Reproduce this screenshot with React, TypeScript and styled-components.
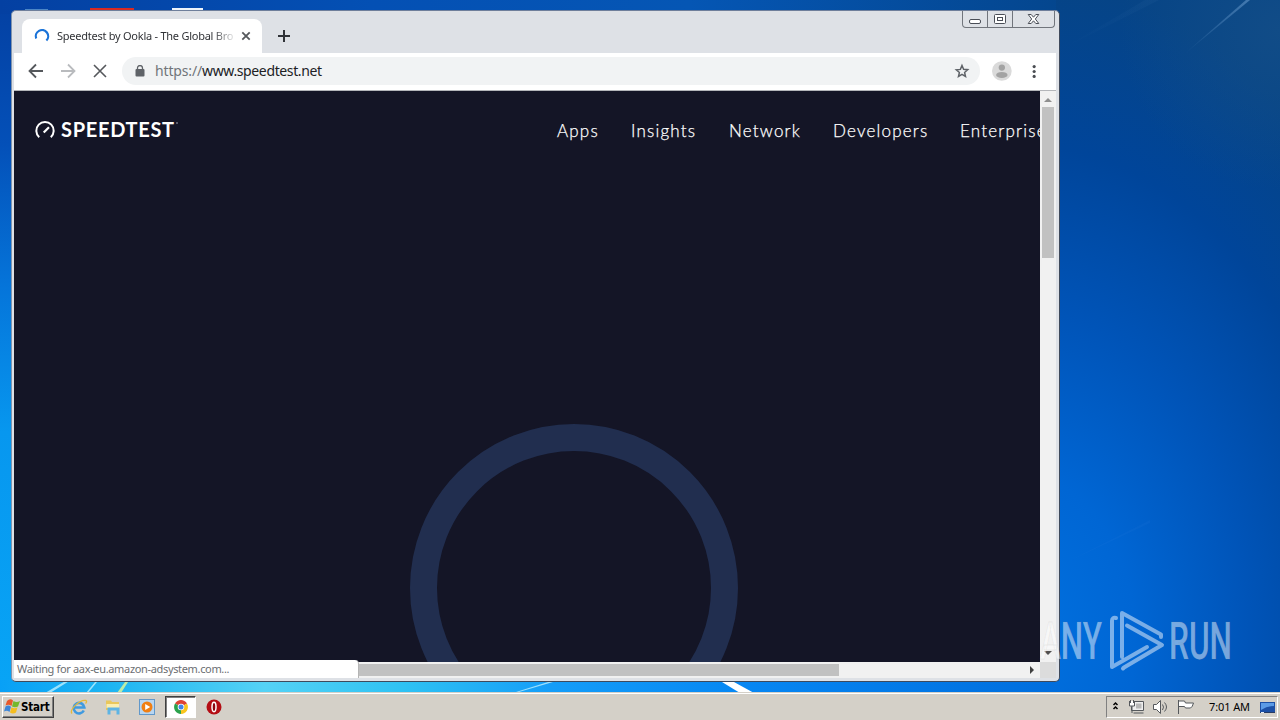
import React from "react";
import styled, { createGlobalStyle } from "styled-components";

const Global = createGlobalStyle`
  * { box-sizing: border-box; }
  body { margin: 0; overflow: hidden; }
`;

const Desktop = styled.main`
  position: relative;
  width: 1280px;
  height: 720px;
  overflow: hidden;
  display: flex;
  flex-direction: column;
  justify-content: space-between;
  font-family: "Noto Sans", "Open Sans", sans-serif;
  background: #0058c0;
`;

const Wallpaper = styled.svg`
  position: absolute;
  inset: 0;
`;

const Window = styled.section`
  position: relative;
  width: 1049px;
  height: 672px;
  margin: 10px 0 0 11px;
  padding: 0 3px 3px 2px;
  border: 1px solid #3f4a5c;
  border-top-color: #6f7f9b;
  border-left-color: #8295ad;
  border-radius: 5px;
  background: #dee1e6;
  display: flex;
  flex-direction: column;
`;

const TabStrip = styled.header`
  height: 42px;
  display: flex;
  align-items: flex-end;
  padding-left: 8px;
  flex: none;
`;

const Tab = styled.div`
  width: 240px;
  height: 34px;
  border-radius: 8px 8px 0 0;
  background: #fff;
  display: flex;
  align-items: center;
  padding: 0 10px 0 12px;
`;

const TabTitle = styled.span`
  width: 176px;
  margin: -2px 0 0 7px;
  overflow: hidden;
  white-space: nowrap;
  font-size: 11px;
  letter-spacing: -0.25px;
  color: #303236;
  mask-image: linear-gradient(90deg, #000 155px, transparent 180px);
`;

const TabClose = styled.svg`
  margin-left: 8px;
`;

const NewTab = styled.svg`
  margin: 0 0 11px 16px;
`;

const Captions = styled.div`
  position: absolute;
  right: 4px;
  top: 0;
  width: 93px;
  height: 17px;
  display: flex;
  border: 1px solid #71757c;
  border-top: 0;
  border-radius: 0 0 4px 4px;
`;

const Caption = styled.div<{ $w: number }>`
  width: ${(p) => p.$w}px;
  display: flex;
  align-items: center;
  justify-content: center;
  & + & { border-left: 1px solid #71757c; }
`;

const Toolbar = styled.div`
  height: 38px;
  flex: none;
  background: #fff;
  border-bottom: 1px solid #b4b6ba;
  display: flex;
  align-items: center;
  padding: 0 0 1px 12px;
`;

const ToolIcon = styled.svg`
  width: 20px;
  height: 20px;
  margin-right: 12px;
  flex: none;
`;

const Omnibox = styled.div`
  width: 858px;
  height: 28px;
  flex: none;
  border-radius: 14px;
  background: #f1f3f4;
  display: flex;
  align-items: center;
  padding: 0 10px 0 13px;
  margin-right: 12px;
`;

const Url = styled.span`
  flex: 1;
  margin-left: 10px;
  font-size: 14px;
  line-height: 20px;
  letter-spacing: -0.37px;
  color: #202124;
  i { font-style: normal; color: #70757a; letter-spacing: -0.15px; }
`;

const Body = styled.div`
  height: 571px;
  display: flex;
  flex: none;
`;

const Page = styled.div`
  width: 1026px;
  height: 571px;
  flex: none;
  background: #141526;
  overflow: hidden;
`;

const SiteHeader = styled.div`
  height: 78px;
  padding-left: 21px;
  display: flex;
  align-items: center;
  width: 1200px;
`;

const Brand = styled.div`
  width: 522px;
  display: flex;
  align-items: center;
  color: #fff;
`;

const BrandName = styled.span`
  margin: -2px 0 0 5px;
  font: 700 20px/24px Lato, sans-serif;
  letter-spacing: 0.7px;
`;

const Trademark = styled.span`
  margin: -14px 0 0 1px;
  width: 2px;
  height: 2px;
  border-radius: 50%;
  background: #6f7080;
`;

const NavItem = styled.a<{ $w: number }>`
  width: ${(p) => p.$w}px;
  flex: none;
  margin-top: 1px;
  font: 300 17px/20px Lato, sans-serif;
  letter-spacing: 1.2px;
  -webkit-text-stroke: 0.25px #fff;
  color: #fff;
`;

const Ring = styled.div`
  width: 328px;
  height: 328px;
  margin: 255px 0 0 396px;
  border: 27px solid #212e4f;
  border-radius: 50%;
`;

const VScroll = styled.div`
  width: 16px;
  flex: none;
  background: #f1f1f1;
  display: flex;
  flex-direction: column;
  align-items: center;
  justify-content: space-between;
`;

const VThumb = styled.div`
  width: 12px;
  height: 151px;
  margin-bottom: auto;
  background: #c1c1c1;
`;

const HScroll = styled.div`
  height: 16px;
  flex: none;
  display: flex;
  align-items: center;
  background: #f1f1f1;
`;

const Status = styled.div`
  width: 345px;
  height: 18px;
  flex: none;
  margin-top: -2px;
  padding-left: 3px;
  border-radius: 0 4px 0 0;
  border-right: 1px solid #b5b5b5;
  background: #fff;
  color: #6b6e72;
  font-size: 11px;
  letter-spacing: -0.34px;
  line-height: 18px;
  white-space: nowrap;
`;

const HThumb = styled.div`
  width: 480px;
  height: 12px;
  flex: none;
  margin-right: auto;
  background: #c1c1c1;
`;

const Corner = styled.div`
  width: 16px;
  height: 16px;
  background: #dcdcdc;
`;

const Watermark = styled.svg`
  position: absolute;
  left: 1036px;
  top: 604px;
`;

const Taskbar = styled.footer`
  position: relative;
  height: 28px;
  background: #d4d0c8;
  border-top: 1px solid #d4d0c8;
  box-shadow: inset 0 1px #fff;
  display: flex;
  align-items: center;
  padding: 2px 2px 2px;
`;

const Start = styled.div`
  width: 52px;
  height: 22px;
  margin-right: 8px;
  border: 1px solid;
  border-color: #fff #404040 #404040 #fff;
  box-shadow: inset -1px -1px #808080;
  display: flex;
  align-items: center;
  padding-left: 1px;
  font: 700 11.5px/20px "DejaVu Sans Condensed", "DejaVu Sans", sans-serif;
  letter-spacing: -0.2px;
  color: #000;
`;

const QuickItem = styled.div<{ $active?: boolean; $w: number }>`
  width: ${(p) => p.$w}px;
  height: 22px;
  display: flex;
  align-items: center;
  justify-content: center;
  ${(p) => p.$active && `
    margin-left: 1px;
    background: #fff;
    border: 1px solid;
    border-color: #404040 #fff #fff #404040;
    box-shadow: inset 1px 1px #808080;
  `}
`;

const Tray = styled.div`
  width: 172px;
  height: 22px;
  margin-left: auto;
  border: 1px solid;
  border-color: #808080 #fff #fff #808080;
  display: flex;
  align-items: center;
  padding-left: 4px;
`;

const Clock = styled.time`
  width: 51px;
  margin-top: -1px;
  font-size: 11px;
  letter-spacing: -0.1px;
  white-space: nowrap;
  color: #000;
`;

const nav: [string, number][] = [["Apps", 74], ["Insights", 98], ["Network", 104], ["Developers", 127], ["Enterprise", 100]];

const Background = () => (
  <Wallpaper width="1280" height="720" viewBox="0 0 1280 720">
    <defs>
      <linearGradient id="left" x1="0" y1="0" x2="0" y2="1">
        <stop offset="0" stopColor="#0440a2" />
        <stop offset=".2" stopColor="#0450b8" />
        <stop offset=".4" stopColor="#0575da" />
        <stop offset=".6" stopColor="#0797ef" />
        <stop offset="1" stopColor="#08a6f6" />
      </linearGradient>
      <linearGradient id="top">
        <stop offset="0" stopColor="#0440a2" />
        <stop offset=".35" stopColor="#0450b4" />
        <stop offset=".65" stopColor="#0556b4" />
        <stop offset="1" stopColor="#04468e" />
      </linearGradient>
      <radialGradient id="right" gradientUnits="userSpaceOnUse" cx="0" cy="0" r="1" gradientTransform="translate(1020 640) scale(460 660)">
        <stop offset="0" stopColor="#0071e0" />
        <stop offset=".25" stopColor="#0066d4" />
        <stop offset=".5" stopColor="#0054b8" />
        <stop offset=".75" stopColor="#00459a" />
        <stop offset="1" stopColor="#064486" />
      </radialGradient>
      <radialGradient id="haze" gradientUnits="userSpaceOnUse" cx="1280" cy="30" r="160">
        <stop offset="0" stopColor="#1c5488" stopOpacity=".5" />
        <stop offset="1" stopColor="#1c5488" stopOpacity="0" />
      </radialGradient>
      <linearGradient id="bottom">
        <stop offset="0" stopColor="#08a0f6" />
        <stop offset=".1" stopColor="#1cb4f2" />
        <stop offset=".25" stopColor="#55d2f5" />
        <stop offset=".38" stopColor="#2fc2f3" />
        <stop offset=".52" stopColor="#159df8" />
        <stop offset=".7" stopColor="#0787f3" />
        <stop offset="1" stopColor="#006ddd" />
      </linearGradient>
      <linearGradient id="ray" x1="0" x2="1" y1="1" y2="0">
        <stop offset="0" stopColor="#78a8d8" stopOpacity="0" />
        <stop offset="1" stopColor="#78a8d8" stopOpacity=".5" />
      </linearGradient>
    </defs>
    <rect width="1060" height="720" fill="url(#left)" />
    <rect width="1060" height="14" fill="url(#top)" />
    <rect x="1056" width="224" height="720" fill="url(#right)" />
    <rect x="1050" width="230" height="250" fill="url(#haze)" />
    <rect y="680" width="1060" height="14" fill="url(#bottom)" />
    <path d="M1182 56 1246 0h4z" fill="url(#ray)" />
    <path d="M1060 50 1145 0h14z" fill="url(#ray)" opacity=".1" />
    <path d="M1065 563 1150 520v3z" fill="#3a90e8" opacity=".08" />
    <path d="M45 693 67 680h4L50 693zM86 693l9-11h2l-9 11zM516 692l32-10h5l-34 10z" fill="#c8f4ff" opacity=".75" />
    <path d="M117 693l8-11h3l-7 11z" fill="#d8f59a" opacity=".85" />
    <path d="M722 682h12l20 11h-14z" fill="#fff" />
    <path d="M90 8h44v4H90z" fill="#d92a22" />
    <path d="M172 8h31v4h-31z" fill="#eef4fa" />
    <path d="M25 9h23v3H25z" fill="#4c86c6" />
  </Wallpaper>
);

const WinFlag = () => (
  <svg width="17" height="17" viewBox="0 0 17 17">
    <path d="M3 3q3-3 6-.5L7.500 8Q5 6 1.500 7.500z" fill="#e8592b" />
    <path d="M9.500 3q3 2 6.500 0l-2 5.500q-3 1.500-6 0z" fill="#75b82c" />
    <path d="M1.500 8.500q3-2 5.500.3L5.500 14q-2.500-2-5.500-.5z" fill="#3d86d8" />
    <path d="M7.500 9.300q3 2 6 0L12 14.500q-3 2-6 0z" fill="#f5bd1f" />
  </svg>
);

export default function App() {
  return (
    <Desktop>
      <Global />
      <Background />
      <Window>
        <TabStrip>
          <Tab>
            <svg width="16" height="16" viewBox="0 0 16 16" fill="none" stroke="#1a73d8" strokeWidth="2.2">
              <path d="M2.2 10.500A6.200 6.200 0 1 1 12.400 12.600" />
            </svg>
            <TabTitle>Speedtest by Ookla - The Global Bro</TabTitle>
            <TabClose width="10" height="10" viewBox="0 0 10 10" stroke="#55585c" strokeWidth="1.8">
              <path d="m1.300 1.300 7.400 7.400m0-7.400-7.400 7.400" />
            </TabClose>
          </Tab>
          <NewTab width="12" height="12" viewBox="0 0 12 12" stroke="#303338" strokeWidth="2">
            <path d="M6 0v12M0 6h12" />
          </NewTab>
        </TabStrip>
        <Captions>
          <Caption $w={24}>
            <svg width="13" height="15" viewBox="0 0 13 15"><rect x=".5" y="7.500" width="11" height="4" rx="1.500" fill="#fff" stroke="#4a4e57" /></svg>
          </Caption>
          <Caption $w={25}>
            <svg width="12" height="11" viewBox="0 0 12 11" fill="#fff" stroke="#4a4e57"><rect x=".5" y=".5" width="11" height="9" rx="1" /><rect x="3.5" y="3.5" width="5" height="3" /></svg>
          </Caption>
          <Caption $w={42}>
            <svg width="13" height="11" viewBox="0 0 13 11"><path d="M1.2.5h3l2.3 2.7L8.8.5h3L8.3 5l3.5 4.5h-3L6.5 6.8 4.2 9.500h-3L4.700 5z" fill="#fff" stroke="#4a4e57" /></svg>
          </Caption>
        </Captions>
        <Toolbar>
          <ToolIcon viewBox="0 0 20 20" fill="none" stroke="#55585c" strokeWidth="1.8"><path d="M17 10H4M10 3.500 3.500 10l6.500 6.500" /></ToolIcon>
          <ToolIcon viewBox="0 0 20 20" fill="none" stroke="#b9bbbe" strokeWidth="1.8"><path d="M3 10h13M10 3.500 16.500 10 10 16.500" /></ToolIcon>
          <ToolIcon viewBox="0 0 20 20" fill="none" stroke="#55585c" strokeWidth="1.6"><path d="m4 4 12 12M16 4 4 16" /></ToolIcon>
          <Omnibox>
            <svg width="10" height="12" viewBox="0 0 10 12"><rect x=".5" y="4" width="9" height="7.500" rx="1" fill="#5f6368" /><path d="M2.500 4.500V3a2.500 2.500 0 0 1 5 0v1.500" fill="none" stroke="#5f6368" strokeWidth="1.300" /></svg>
            <Url><i>https://</i>www.speedtest.net</Url>
            <svg width="16" height="16" viewBox="0 0 16 16"><path d="m8 2.500 1.600 3.800 4.100.4-3.100 2.700.9 4L8 11.400l-3.500 2.100.9-4-3.100-2.700 4.100-.4z" fill="none" stroke="#5f6368" strokeWidth="1.500" /></svg>
          </Omnibox>
          <svg width="20" height="20" viewBox="0 0 20 20"><circle cx="10" cy="10" r="10" fill="#dadada" /><circle cx="10" cy="6.500" r="3.200" fill="#a3a3a3" /><ellipse cx="10" cy="14" rx="5.800" ry="3" fill="#a3a3a3" /></svg>
          <svg width="45" height="20" viewBox="0 0 45 20" fill="#4a4d52"><circle cx="22.500" cy="5.500" r="1.600" /><circle cx="22.500" cy="10.500" r="1.600" /><circle cx="22.500" cy="15.500" r="1.600" /></svg>
        </Toolbar>
        <Body>
          <Page>
            <SiteHeader>
              <Brand>
                <svg width="21" height="20" viewBox="0 0 21 20" fill="none" stroke="#fff"><path d="M4.200 17.200a8.700 8.700 0 1 1 11.600 0" strokeWidth="2" /><path d="m8.700 12.500 5.300-5.300" strokeWidth="2.200" /></svg>
                <BrandName>SPEEDTEST</BrandName>
                <Trademark />
              </Brand>
              {nav.map(([label, w]) => <NavItem key={label} $w={w}>{label}</NavItem>)}
            </SiteHeader>
            <Ring />
          </Page>
          <VScroll>
            <svg width="16" height="16" viewBox="0 0 16 16"><path d="m4 11 4-4 4 4z" fill="#8f8f8f" /></svg>
            <VThumb />
            <svg width="16" height="16" viewBox="0 0 16 16"><path d="m4 5 4 4 4-4z" fill="#505050" /></svg>
          </VScroll>
        </Body>
        <HScroll>
          <Status>Waiting for aax-eu.amazon-adsystem.com...</Status>
          <HThumb />
          <svg width="16" height="16" viewBox="0 0 16 16"><path d="m6 4 4 4-4 4z" fill="#404040" /></svg>
          <Corner />
        </HScroll>
      </Window>
      <Watermark width="220" height="76" viewBox="0 0 220 76">
        <g fill="#fff" fillOpacity=".48" stroke="#8a8a8a" strokeOpacity=".14" fontFamily="Roboto, sans-serif" fontWeight="500" fontSize="52">
          <text x="4" y="55" textLength="62" lengthAdjust="spacingAndGlyphs">ANY</text>
          <text x="133" y="55" textLength="63" lengthAdjust="spacingAndGlyphs">RUN</text>
        </g>
        <g fill="none" stroke="#fff" strokeOpacity=".48" strokeWidth="4" strokeLinejoin="round" strokeLinecap="round">
          <path d="M80 14q-4-1-4 3v46l35-20" />
          <path d="M86 53V9l39 21.500v2.500" />
          <path d="m91 21.500 35 19.500-38 22.500-1 1" />
        </g>
      </Watermark>
      <Taskbar>
        <Start><WinFlag />Start</Start>
        <QuickItem $w={34}>
          <svg width="18" height="18" viewBox="0 0 18 18" fill="none"><path d="M13.800 12.500A5.300 5.300 0 1 1 14.300 9.500H5" stroke="#3f9ae0" strokeWidth="2.600" /><path d="M2 15.500C-1 12 10 1 16 2.500c1 .5.500 2-.5 3" stroke="#e5b93a" strokeWidth="1.300" /></svg>
        </QuickItem>
        <QuickItem $w={34}>
          <svg width="16" height="16" viewBox="0 0 16 16"><path d="M1 1.500h5l1 1.500h7v8H1z" fill="#e9c75c" /><path d="M1.500 5h12.500v4H1.500z" fill="#fbeeb0" /><path d="M2.500 15.500V8.500h12v7h-3v-4h-6v4z" fill="#5eb4e4" /></svg>
        </QuickItem>
        <QuickItem $w={34}>
          <svg width="16" height="16" viewBox="0 0 16 16"><rect x=".5" y=".5" width="15" height="15" fill="#b8d6f1" stroke="#6198ca" /><circle cx="8" cy="8" r="5.500" fill="#f07f13" /><path d="m6.200 5 5 3-5 3z" fill="#fff" /></svg>
        </QuickItem>
        <QuickItem $w={31} $active>
          <svg width="14" height="14" viewBox="0 0 14 14"><path d="M7 7 1 3.500A7 7 0 0 1 13 3.500z" fill="#df4334" /><path d="M7 7l6-3.500A7 7 0 0 1 7 14z" fill="#f9c51d" /><path d="M7 7v7A7 7 0 0 1 1 3.500z" fill="#2ba24c" /><circle cx="7" cy="7" r="3.300" fill="#fff" /><circle cx="7" cy="7" r="2.500" fill="#4285e8" /></svg>
        </QuickItem>
        <QuickItem $w={36}>
          <svg width="16" height="16" viewBox="0 0 16 16"><circle cx="8" cy="8" r="7.500" fill="#b40d14" /><ellipse cx="8" cy="8" rx="2" ry="4.700" fill="#8d0610" stroke="#fff" strokeWidth="1.500" /></svg>
        </QuickItem>
        <Tray>
          <svg width="98" height="20" viewBox="0 0 98 20" fill="none" stroke="#55585c">
            <path d="m2.500 8 2-2 2 2m-4 4 2-2 2 2" stroke="#000" strokeWidth="1.500" />
            <path d="M23.500 4.500h9v9h-12v-4M22.500 16h10" fill="#eee" /><path d="M25 6.500h5.500v5H25z" fill="#b8b8b8" stroke="none" /><path d="M18.500 4v5h5V4m-4-1v3m3-3v3m-1.500 3v7" fill="#fff" />
            <path d="M42.500 7.500v5h3l4 4V3.500l-4 4z" fill="#fff" /><path d="M51.500 7.500q2 2.500 0 5.500m2-7.500q4 4.500 0 9" />
            <path d="M67.500 3v14M67.500 4h6l1 2h8q-1 4-3 5h-5l-1-1.500h-6" fill="#fff" />
          </svg>
          <Clock>7:01 AM</Clock>
          <svg width="16" height="14" viewBox="0 0 16 14"><path d="M0 2h15v10H0z" fill="#1c50a6" /><path d="M1 3h13v3Q7 6 1 10z" fill="#5b9be6" /><path d="M0 12h15v1H0z" fill="#273b63" /><path d="M1 12h3v1H1z" fill="#e8eef8" /></svg>
        </Tray>
      </Taskbar>
    </Desktop>
  );
}
